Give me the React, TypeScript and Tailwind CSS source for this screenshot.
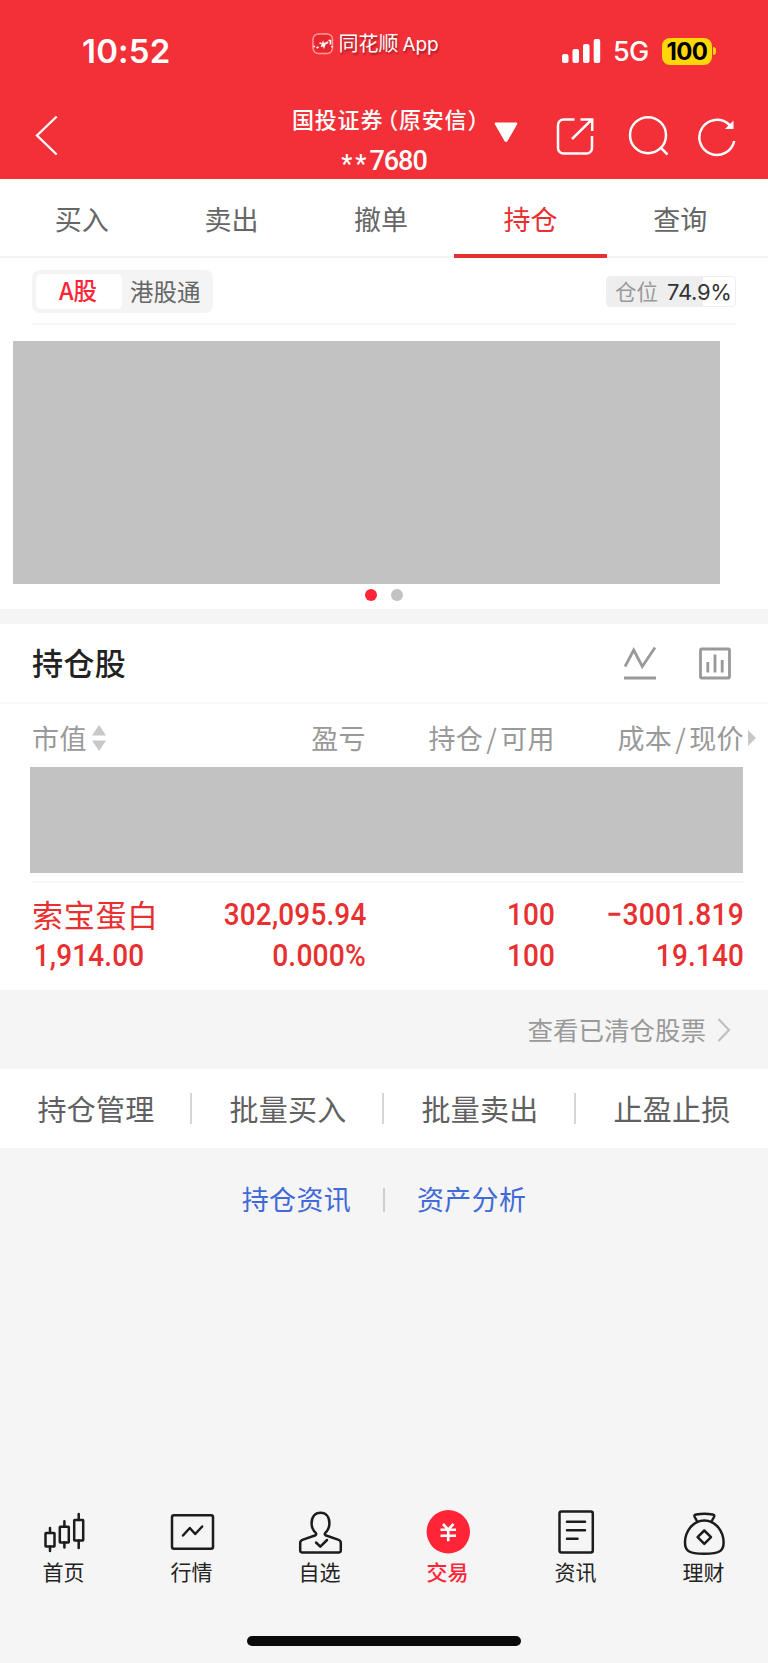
import type { ReactNode } from "react";
import clsx from "clsx";

const tabs = ["买入", "卖出", "撤单", "持仓", "查询"];
const actions = ["持仓管理", "批量买入", "批量卖出", "止盈止损"];

const HomeIcon = () => (
  <svg width="48" height="48" viewBox="0 0 48 48" fill="none" stroke="#1c1c1c" strokeWidth="2.5" strokeLinecap="round" strokeLinejoin="round">
    <rect x="5.5" y="25" width="9" height="13.5" rx="0.5" />
    <path d="M10 20v5M10 38.5v4.5" />
    <rect x="19.8" y="18.7" width="9" height="15.8" rx="0.5" />
    <path d="M24.4 13.3v5.4M24.4 34.5v5" />
    <rect x="34.2" y="12" width="9" height="20.5" rx="0.5" />
    <path d="M38.7 6v6M38.7 32.5v7.5" />
  </svg>
);

const MarketIcon = () => (
  <svg width="48" height="48" viewBox="0 0 48 48" fill="none" stroke="#1c1c1c" strokeWidth="2.5" strokeLinecap="round" strokeLinejoin="round">
    <rect x="4" y="7.2" width="41" height="33.6" rx="2" />
    <path d="M15 27.5l6.8-7.5 5.4 6 7-7.5" />
  </svg>
);

const WatchIcon = () => (
  <svg width="48" height="48" viewBox="0 0 48 48" fill="none" stroke="#1c1c1c" strokeWidth="2.5" strokeLinecap="round" strokeLinejoin="round">
    <path d="M19.6 27.2c1-1 .7-1.7 0-2.5-2.7-2.5-4-5-4-9.400 0-6.800 3.500-10.600 8.900-10.600s8.900 3.800 8.900 10.600c0 4.400-1.300 6.900-4 9.400-.7.800-1 1.500 0 2.500L42 31.600c1.900.7 2.800 1.500 2.800 3.200v7.800c0 1.300-.5 1.800-1.800 1.800H6c-1.300 0-1.800-.5-1.800-1.800v-7.800c0-1.700.9-2.500 2.800-3.200z" />
    <path d="M20 34.500l4.300 4.200 6.700-6.700" />
  </svg>
);

const TradeIcon = () => (
  <svg width="48" height="48" viewBox="0 0 48 48" fill="none">
    <circle cx="24.3" cy="23.8" r="21.7" fill="#ff2436" />
    <path d="M19 16l5.200 5.700 5.300-5.700M16.500 21.700h15.500M16.500 27.700h15.500M24.200 21.700v11.500" stroke="#fff" strokeWidth="2.6" />
  </svg>
);

const NewsIcon = () => (
  <svg width="48" height="48" viewBox="0 0 48 48" fill="none" stroke="#1c1c1c" strokeWidth="2.5" strokeLinecap="round" strokeLinejoin="round">
    <rect x="7.5" y="3.6" width="33.3" height="41" rx="2" />
    <path d="M15 13.800h18M15 22.300h18M15 30.700h10.500" />
  </svg>
);

const WealthIcon = () => (
  <svg width="48" height="48" viewBox="0 0 48 48" fill="none" stroke="#1c1c1c" strokeWidth="2.5" strokeLinecap="round" strokeLinejoin="round">
    <path d="M17.5 14l-2.800-5c-.9-1.700 0-2.300 1.500-2.600 5.300-1 11-1 16.300 0 1.500.3 2.400.9 1.500 2.600l-2.800 5" />
    <path d="M24.300 12.500C12.500 12.500 5 24 5 34.500c0 7.500 2.500 11.300 19.300 11.300s19.300-3.800 19.300-11.300c0-10.500-7.500-22-19.300-22z" />
    <path d="M24.300 22.500l6.700 6.700-6.700 6.700-6.700-6.700z" />
  </svg>
);

const navItems: { label: string; icon: ReactNode; active?: boolean }[] = [
  { label: "首页", icon: <HomeIcon /> },
  { label: "行情", icon: <MarketIcon /> },
  { label: "自选", icon: <WatchIcon /> },
  { label: "交易", icon: <TradeIcon />, active: true },
  { label: "资讯", icon: <NewsIcon /> },
  { label: "理财", icon: <WealthIcon /> },
];

const StatusBar = () => (
  <div className="grid h-[90px] grid-cols-3 text-white">
    <div className="pt-[31px] pl-[82px] font-['Inter'] text-[33px] leading-10 font-semibold tracking-[0.2px]">10:52</div>
    <div className="flex h-[87px] items-center justify-center gap-[5px] pr-[18px]">
      <svg width="22" height="22" viewBox="0 0 22 22" fill="none">
        <rect x="1" y="1" width="19.5" height="19.5" rx="5.5" fill="#e8262d" stroke="#ff9d9d" strokeWidth="1.4" />
        <path d="M1.500 13.500h1.700M4.500 15l2-1M7.500 10l2 .5M9.500 14l1.500-4 1 3.500 1.500-4M14 10.500l2-1.500M16.500 7.500h2v4M20 13v1.500" stroke="#fff" strokeWidth="1.7" />
      </svg>
      <span className="pt-[1px] text-[20px] leading-6 whitespace-nowrap text-shadow-[1px_2px_2px_rgba(0,0,0,0.35)]">
        同花顺<span className="ml-[4px] font-['Inter'] text-[19px] tracking-[-0.2px]">App</span>
      </span>
    </div>
    <div className="flex h-[102px] items-center pl-[50px]">
      <svg width="39" height="24" viewBox="0 0 39 24" fill="#fff">
        <rect x="0" y="15" width="6.5" height="9" rx="2" />
        <rect x="10.5" y="10" width="6.5" height="14" rx="2" />
        <rect x="21" y="5" width="6.5" height="19" rx="2" />
        <rect x="31.7" y="0" width="6.5" height="24" rx="2" />
      </svg>
      <span className="ml-[12px] w-[38px] pt-[2px] font-['Inter'] text-[27px] leading-7 font-medium tracking-[-0.8px]">5G</span>
      <span className="ml-[11px] flex h-[27px] w-[50px] items-center justify-center rounded-[8px] bg-[#ffd60a] pt-px font-['Inter'] text-[24px] leading-none font-bold tracking-[-0.6px] text-black">
        100
      </span>
      <span className="ml-[1px] h-[8px] w-[3px] rounded-r-full bg-[#ffd60a]" />
    </div>
  </div>
);

const TitleBar = () => (
  <div className="flex h-[89px] text-white">
    <svg className="mt-[25px] ml-[34px]" width="26" height="42" viewBox="0 0 26 42" fill="none" stroke="#fff" strokeWidth="2.3">
      <path d="M22.700 1.500L3 20.500l19.700 19" />
    </svg>
    <div className="ml-[232px] w-[184px] pt-[12px] text-center">
      <p className="text-left text-[22px] leading-8 font-medium tracking-[0.8px] whitespace-nowrap [font-feature-settings:'halt']">
        国投证券<span className="ml-[4px]">（</span>原安信<span>）</span>
      </p>
      <p className="pt-[11px] font-['Roboto'] text-[27px] leading-8 font-medium tracking-[-1px]">
        <span className="relative top-[3px] text-[25px] tracking-[3px]">**</span>7680
      </p>
    </div>
    <svg className="mt-[31px] ml-[17px]" width="26" height="22" viewBox="0 0 26 22" fill="#fff">
      <path d="M3 1.500h20c1.200 0 1.700 1 1 2L14.500 20c-.8 1.200-2.200 1.200-3 0L2 3.500c-.7-1-.2-2 1-2z" />
    </svg>
    <svg className="mt-[25px] ml-[36px]" width="40" height="42" viewBox="0 0 40 42" fill="none" stroke="#fff" strokeWidth="2.5">
      <path d="M19.500 4.500H8.500a5.500 5.500 0 00-5.500 5.500v23a5.500 5.500 0 005.500 5.500h23a5.500 5.500 0 005.500-5.500V21" />
      <path d="M17 24L36.500 4.800M25.500 4.500h11.700V16" />
    </svg>
    <svg className="mt-[25px] ml-[33px]" width="42" height="42" viewBox="0 0 42 42" fill="none" stroke="#fff" strokeWidth="2.5">
      <circle cx="20" cy="20.2" r="18" />
      <path d="M32.500 32.500l7 7" />
    </svg>
    <svg className="mt-[25px] ml-[27px]" width="40" height="42" viewBox="0 0 40 42" fill="none" stroke="#fff" strokeWidth="2.5">
      <path d="M37.200 26A17.600 17.600 0 1132 9.500L35 12.500" />
      <path d="M36.500 5.500v8.500h-8.500z" fill="#fff" stroke="none" />
    </svg>
  </div>
);

const StockSummary = () => (
  <section className="h-[351px] bg-white pt-[12px]">
    <div className="mx-8 flex h-[55px] items-start justify-between border-b-2 border-[#f8f8f8]">
      <div className="flex h-[43px] w-[181px] items-center rounded-[8px] bg-[#f4f4f4] p-[4px] text-[23.5px] leading-[33px]">
        <span className="h-[35px] w-[86px] rounded-[5px] bg-white pr-[2px] text-center font-medium text-[#ff2436]">A股</span>
        <span className="ml-[8px] pb-[1px] text-[#666]">港股通</span>
      </div>
      <div className="mt-[6px] flex h-[31px] w-[130px] items-center rounded-[4px] border border-[#eee] bg-linear-to-r from-[#eee] from-75% to-white to-75% pl-[8px] text-[21.5px]">
        <span className="pb-[2px] leading-7 text-[#999]">仓位</span>
        <span className="ml-[9px] font-['Inter'] text-[22px] leading-7 tracking-[-0.3px] text-[#333]">74.9%</span>
      </div>
    </div>
    <div className="mt-[16px] ml-[13px] h-[243px] w-[707px] bg-[#c2c2c2]" />
    <div className="mt-[5px] flex justify-center gap-[14px]">
      <span className="h-[12px] w-[12px] rounded-full bg-[#ff2436]" />
      <span className="h-[12px] w-[12px] rounded-full bg-[#c2c2c2]" />
    </div>
  </section>
);

const Holdings = () => (
  <section className="mt-[15px] h-[366px] bg-white">
    <div className="flex h-[80px] items-center justify-between border-b-2 border-[#f7f7f7] pr-[37px] pl-8">
      <h2 className="pb-[2px] text-[31px] leading-10 font-medium tracking-[0.4px] text-[#222]">持仓股</h2>
      <div className="flex gap-[43px]">
        <svg width="32" height="34" viewBox="0 0 32 34" fill="none" stroke="#999" strokeWidth="2.8">
          <path d="M1 20.500L9.700 4l8.600 16.500L31 1.500M0 32h32" />
        </svg>
        <svg width="32" height="34" viewBox="0 0 32 34" fill="none" stroke="#999" strokeWidth="2.8">
          <rect x="1.5" y="3" width="29" height="29" rx="1" />
          <path d="M8.800 16v10.500M16 8.500v18M23.200 14v12.500" />
        </svg>
      </div>
    </div>
    <div className="ml-8 grid h-[63px] grid-cols-[176px_158px_189px_189px_1fr] items-center pt-[5px] text-right text-[27px] leading-9 tracking-[0.4px] text-[#999]">
      <div className="flex items-center gap-[5px]">
        市值
        <svg width="14" height="26" viewBox="0 0 14 26" fill="#c8c8c8">
          <path d="M7 0l7 10.500H0zM7 26l7-10.500H0z" />
        </svg>
      </div>
      <span>盈亏</span>
      <span>持仓<span className="mx-[3px]">/</span>可用</span>
      <span>成本<span className="mx-[3px]">/</span>现价</span>
      <svg className="ml-[4px]" width="8" height="16" viewBox="0 0 8 16" fill="#c8c8c8">
        <path d="M0 0l8 8-8 8z" />
      </svg>
    </div>
    <div className="ml-[30px] h-[106px] w-[713px] bg-[#c2c2c2]" />
    <div className="mt-[8px] ml-8 grid w-[712px] grid-cols-[176px_158px_189px_189px] border-t-2 border-[#f8f8f8] pt-[11px] text-right font-['Roboto'] text-[31px] leading-[41px] font-medium tracking-[0.2px] text-[#e93030]">
      <span className="relative bottom-px text-left font-['Noto_Sans_CJK_SC'] font-normal tracking-[0.7px]">索宝蛋白</span>
      <span className="origin-right scale-x-[0.9]">302,095.94</span>
      <span className="origin-right scale-x-[0.9]">100</span>
      <span className="origin-right scale-x-[0.91]">−3001.819</span>
      <span className="origin-left scale-x-[0.9] pl-[2px] text-left">1,914.00</span>
      <span className="origin-right scale-x-[0.91]">0.000%</span>
      <span className="origin-right scale-x-[0.9]">100</span>
      <span className="origin-right scale-x-[0.9]">19.140</span>
    </div>
  </section>
);

const App = () => {
  return (
    <div className="flex h-[1663px] w-[768px] flex-col overflow-hidden bg-[#f5f5f5] font-['Noto_Sans_CJK_SC',sans-serif]">
      <header className="h-[179px] bg-[#f32f38]">
        <StatusBar />
        <TitleBar />
      </header>

      {/* Trade tabs */}
      <nav className="flex h-[79px] border-b-2 border-[#f3f3f3] bg-white pr-[13px] pl-[7px] text-[27px] leading-10">
        {tabs.map((tab) => (
          <div
            key={tab}
            className={clsx("relative flex-1 pt-[20px] text-center", tab === "持仓" ? "text-[#e93030]" : "text-[#666]")}
          >
            {tab}
            {tab === "持仓" && <span className="absolute -right-[2px] -bottom-[2px] -left-[2px] h-[4px] bg-[#e93030]" />}
          </div>
        ))}
      </nav>

      <StockSummary />
      <Holdings />

      <div className="flex h-[79px] items-center justify-end pr-[37px] text-[25.5px] leading-8 text-[#999]">
        <span className="pb-[2px]">查看已清仓股票</span>
        <svg className="ml-[11px]" width="14" height="24" viewBox="0 0 14 24" fill="none" stroke="#c0c0c0" strokeWidth="2.2">
          <path d="M1.500 1l10.500 11L1.500 23" />
        </svg>
      </div>

      {/* Quick actions */}
      <div className="flex h-[79px] items-center bg-white text-[29px] leading-10 tracking-[0.2px] text-[#606060]">
        {actions.map((action, i) => (
          <div key={action} className="flex flex-1 items-center">
            <span className={clsx("-ml-[2px] h-[31px] w-[2px]", i > 0 && "bg-[#d6d6d6]")} />
            <span className="flex-1 pb-[2px] text-center">{action}</span>
          </div>
        ))}
      </div>

      <div className="flex h-[104px] items-center justify-center gap-[32px] text-[27px] leading-9 tracking-[0.3px] text-[#4169d8]">
        <span className="pb-[2px]">持仓资讯</span>
        <span className="h-[24px] w-[2px] bg-[#d0d0d0]" />
        <span className="pb-[2px]">资产分析</span>
      </div>

      {/* Bottom navigation */}
      <nav className="mt-auto flex h-[128px] text-[21px] leading-7 text-[#222]">
        {navItems.map((item) => (
          <div key={item.label} className={clsx("flex flex-1 flex-col items-center", item.active && "font-medium text-[#ff2436]")}>
            {item.icon}
            <span className="mt-[1px] pr-px">{item.label}</span>
          </div>
        ))}
      </nav>
      <div className="mb-[17px] ml-[247px] h-[10px] w-[274px] shrink-0 rounded-full bg-[#0a0a0a]" />
    </div>
  );
};

export default App;
